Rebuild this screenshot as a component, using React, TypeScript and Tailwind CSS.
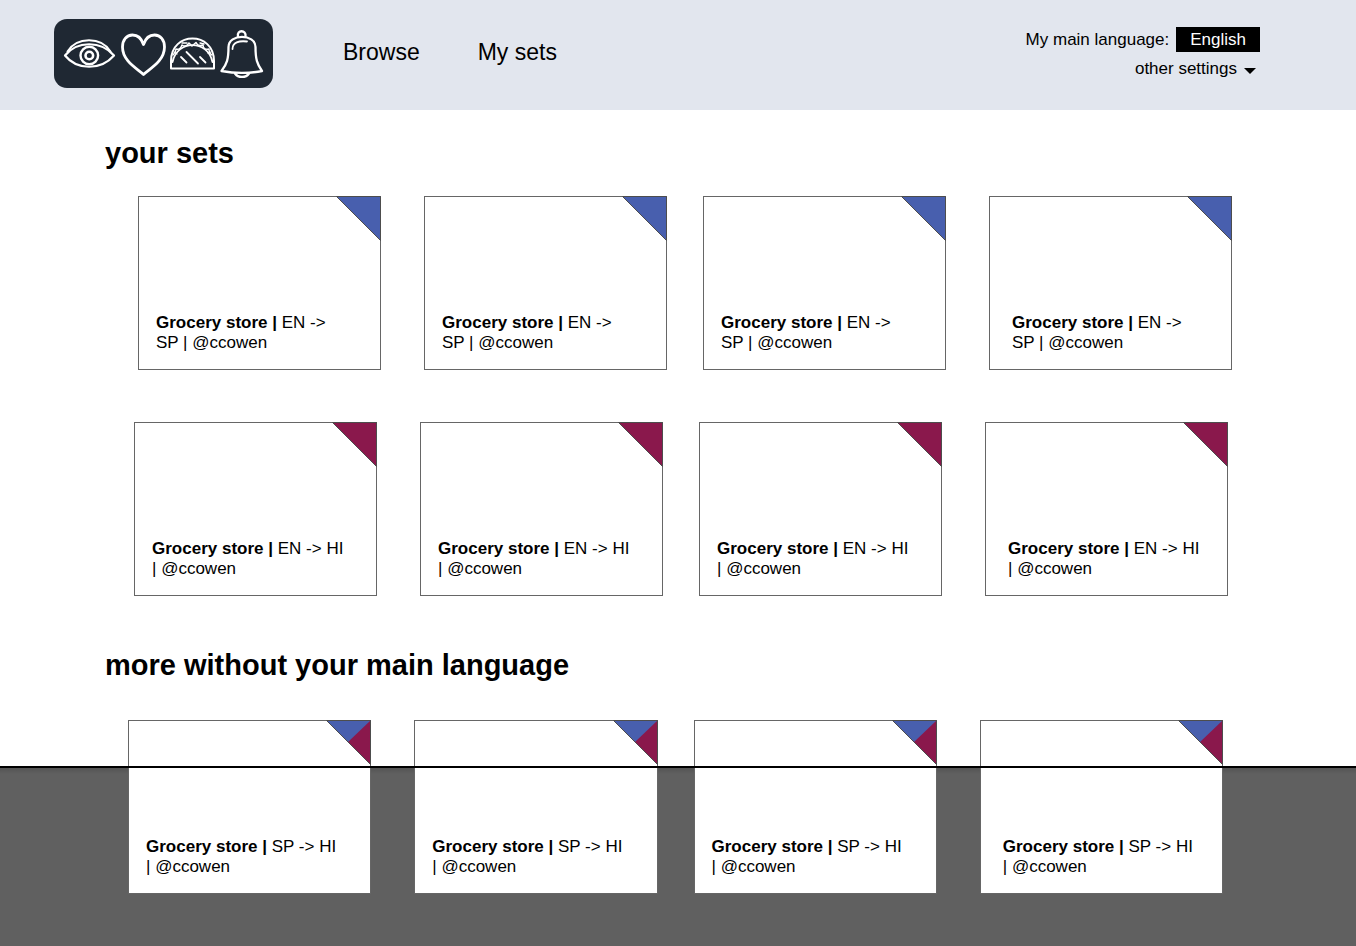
type Card = { id: number; from: string; to: string };
type Corner = "blue" | "maroon" | "split";

const pairs = [
  [0, 1],
  [2, 3],
];

const BLUE = "#485fae";
const MAROON = "#8a184c";

function Logo() {
  return (
    <svg
      viewBox="0 0 219 69"
      className="h-[69px] w-[219px] shrink-0"
      fill="none"
      stroke="#fff"
      strokeWidth="2.2"
      strokeLinejoin="round"
      strokeLinecap="round"
      role="img"
      aria-label="Home"
    >
      <rect width="219" height="69" rx="13" fill="#1f2833" stroke="none" />
      {/* eye */}
      <path d="M11 36.500C23 21.500 47 21.500 60 36.500C47 51.500 23 51.500 11 36.500Z" />
      <path d="M13.500 32.500C23 17.500 47 17.500 56.500 32.500" strokeWidth="2" />
      <circle cx="35.300" cy="36.500" r="8.8" strokeWidth="2.4" />
      <circle cx="35.300" cy="36.500" r="3.8" strokeWidth="2.6" />
      {/* heart */}
      <path
        d="M89.500 55.500C84 50 68.500 42.500 68.500 28C68.500 21 72.500 16 78.500 16C83.500 16 87.500 19.500 89.500 25.500C91.500 19.500 95.500 16 100.500 16C106.500 16 110.500 21 110.500 28C110.500 42.500 95 50 89.500 55.500Z"
        strokeWidth="2.8"
      />
      {/* taco */}
      <path d="M117 49.500V42C117 12 160 12 160 42V49.500Z" strokeWidth="2" />
      <path d="M118.500 43C123 20.500 154 20.500 158.500 43" strokeWidth="1.8" />
      <path
        d="M119 36C121 34 122 33 122 30C125 31 127 29 128 26C131 28 133 27 135 24L138 27L142 23.500C143 26 146 27 149 26C149 29 151 31 155 30C155 33 156 35 158 36"
        strokeWidth="1.5"
      />
      <path d="M128 24L133 24M146 24L150 25M120 33L123 35M157 33L154 34" strokeWidth="1.3" />
      <path d="M132.500 33L144 44.500M127 38L132.500 43.500M146 38L151.500 43.500" strokeWidth="1.8" />
      {/* bell */}
      <path
        d="M167.500 52C173 45 174.500 40 174.500 28C174.500 14.500 201.500 14.500 201.500 28C201.500 40 203 45 208 52C196 54.300 180 54.300 167.500 52Z"
        strokeWidth="2.3"
      />
      <path d="M184 17.500C182.500 10.500 192.500 10.500 191.500 17.500M181 54.500C184 59 192 59 195 54.500" strokeWidth="2.3" />
      <path d="M178.500 30C178.500 23.500 185 21.500 193 22.500" strokeWidth="1.8" />
    </svg>
  );
}

function CornerFlag({ kind }: { kind: Corner }) {
  return (
    <svg viewBox="0 0 45 45" className="absolute -top-px -right-px size-[45px]" aria-hidden="true">
      <path d="M0.500 0.500H44.500V44.500Z" fill={kind === "maroon" ? MAROON : BLUE} />
      {kind === "split" && <path d="M44.500 0.500V44.500L22 22Z" fill={MAROON} />}
      <path d="M0.500 0.500H44.500V44.500Z" fill="none" stroke="#4d4d4d" />
    </svg>
  );
}

function SetCard({ card, corner }: { card: Card; corner: Corner }) {
  return (
    <a
      href="#set"
      className={`relative flex h-[174px] flex-col justify-end border border-[#666] bg-white pb-4 ${
        card.id === 3 ? "pl-[22px]" : "pl-[17px]"
      }`}
    >
      <CornerFlag kind={corner} />
      <p className="max-w-[194px] text-[17px] leading-5">
        <strong>Grocery store |</strong> {card.from} -&gt; {card.to} | @ccowen
      </p>
    </a>
  );
}

function CardRow({ from, to, corner }: { from: string; to: string; corner: Corner }) {
  return (
    <div className="grid grid-cols-2 gap-9">
      {pairs.map((pair) => (
        <div key={pair[0]} className="grid grid-cols-2 gap-[43px]">
          {pair.map((id) => (
            <SetCard key={id} card={{ id, from, to }} corner={corner} />
          ))}
        </div>
      ))}
    </div>
  );
}

export default function App() {
  return (
    <div className="flex min-h-screen flex-col bg-white font-['Liberation_Sans',Arial,sans-serif] text-black">
      <header className="flex h-[110px] items-start bg-[#e2e6ee] pr-24 pl-[54px]">
        <a href="#home" className="mt-[19px]">
          <Logo />
        </a>
        <nav className="mt-9 ml-[70px] flex gap-[58px] text-[23px] leading-8">
          <a href="#browse">Browse</a>
          <a href="#my-sets">My sets</a>
        </nav>
        <div className="mt-[27px] ml-auto flex flex-col items-end gap-1 text-[17px] leading-[25px]">
          <div className="flex items-center gap-[7px]">
            <span id="language-label">My main language:</span>
            <button
              type="button"
              aria-labelledby="language-label language-value"
              className="h-[25px] bg-black px-[14px] text-white"
            >
              <span id="language-value">English</span>
            </button>
          </div>
          <button type="button" className="flex items-center gap-[7px] pr-1">
            other settings
            <svg viewBox="0 0 12 6" className="mt-1 h-[6px] w-3" aria-hidden="true">
              <path d="M0 0H12L6 6Z" />
            </svg>
          </button>
        </div>
      </header>

      <main className="flex flex-1 flex-col">
        <section>
          <h2 className="mt-[23px] ml-[105px] text-[29px] leading-10 font-bold">your sets</h2>
          <div className="mt-[23px] pr-[124px] pl-[138px]">
            <CardRow from="EN" to="SP" corner="blue" />
          </div>
          <div className="mt-[52px] pr-32 pl-[134px]">
            <CardRow from="EN" to="HI" corner="maroon" />
          </div>
        </section>

        <section className="flex flex-1 flex-col">
          <h2 className="mt-[49px] ml-[105px] text-[29px] leading-10 font-bold">
            more without your main language
          </h2>
          <div className="relative mt-[35px] flex-1 pr-[133px] pb-[52px] pl-32">
            <div className="absolute inset-x-0 top-[46px] bottom-0 bg-linear-to-b from-[#505050] to-[#606060] to-[8px]" />
            <CardRow from="SP" to="HI" corner="split" />
            <div className="absolute inset-x-0 top-[46px] h-[2px] bg-black" />
          </div>
        </section>
      </main>
    </div>
  );
}
